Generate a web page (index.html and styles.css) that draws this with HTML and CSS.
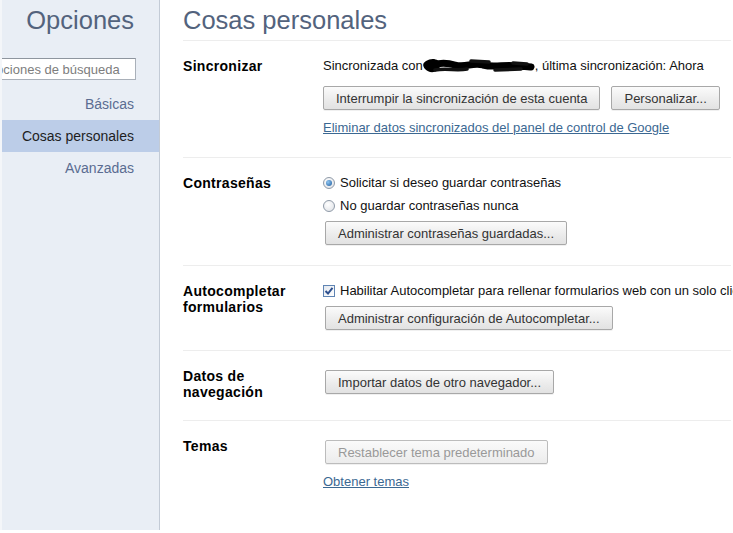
FILE: index.html
```html
<html>
<head>
  <meta charset="UTF-8">
  <title>Opciones - Cosas personales</title>
  <link rel="stylesheet" href="styles.css">
</head>
<body>
  <div class="page">
    <div class="sidebar">
      <div class="side-title">Opciones</div>
      <div class="search-wrap">
        <input class="search" type="text" placeholder="Opciones de búsqueda">
      </div>
      <div class="nav">
        <div class="nav-item">Básicas</div>
        <div class="nav-item selected">Cosas personales</div>
        <div class="nav-item">Avanzadas</div>
      </div>
    </div>

    <div class="main">
      <div class="main-title">Cosas personales</div>

      <div class="section">
        <div class="label">Sincronizar</div>
        <div class="content">
          <div class="line">Sincronizada con<svg class="scribble" width="112" height="18" viewBox="0 0 112 18">
              <!-- hand-drawn blot over the account address -->
              <path d="M3 4 C9 0 18 2 17 9 C16 16 6 17 2 12 C-1 8 0 6 3 4 Z" fill="#000"/>
              <path d="M6 9 C14 6 22 5 32 8 C42 11 50 5 60 8 C72 11 82 7 94 9 C100 10 104 9 108 10" stroke="#000" stroke-width="7" fill="none" stroke-linecap="round"/>
              <path d="M12 13 C24 11 34 14 44 12 M48 4 L66 5 M72 13 L98 12 M90 6 L104 7" stroke="#111" stroke-width="3.5" fill="none" stroke-linecap="round"/>
            </svg>, última sincronización: Ahora</div>
          <div class="btn-row first-gap">
            <button class="btn">Interrumpir la sincronización de esta cuenta</button>
            <button class="btn">Personalizar...</button>
          </div>
          <a class="link" href="#">Eliminar datos sincronizados del panel de control de Google</a>
        </div>
      </div>

      <div class="section">
        <div class="label">Contraseñas</div>
        <div class="content">
          <div class="line"><span class="radio checked"></span>Solicitar si deseo guardar contraseñas</div>
          <div class="line second"><span class="radio"></span>No guardar contraseñas nunca</div>
          <div class="btn-row indent">
            <button class="btn">Administrar contraseñas guardadas...</button>
          </div>
        </div>
      </div>

      <div class="section">
        <div class="label">Autocompletar<br>formularios</div>
        <div class="content">
          <div class="line"><span class="checkbox">
              <svg width="10" height="10" viewBox="0 0 10 10"><path d="M1.5 5 L4 7.5 L8.5 1.8" stroke="#2d4f8e" stroke-width="2" fill="none"/></svg>
            </span>Habilitar Autocompletar para rellenar formularios web con un solo clic</div>
          <div class="btn-row indent">
            <button class="btn">Administrar configuración de Autocompletar...</button>
          </div>
        </div>
      </div>

      <div class="section">
        <div class="label">Datos de<br>navegación</div>
        <div class="content">
          <div class="btn-row indent top">
            <button class="btn">Importar datos de otro navegador...</button>
          </div>
        </div>
      </div>

      <div class="section last">
        <div class="label">Temas</div>
        <div class="content">
          <div class="btn-row indent top">
            <button class="btn" disabled>Restablecer tema predeterminado</button>
          </div>
          <a class="link" href="#">Obtener temas</a>
        </div>
      </div>
    </div>
  </div>
</body>
</html>
```

FILE: styles.css
```css
body {
  margin: 0;
  padding: 0;
  background: #fff;
  font-family: 'Liberation Sans', Arial, sans-serif;
  font-size: 13px;
  color: #111;
  height: 533px;
  overflow: hidden;
}
.page {
  display: flex;
  height: 530px;
}
.sidebar {
  width: 157px;
  flex-shrink: 0;
  background: #e9eef5;
  border-left: 2px solid #f4f6f9;
  border-right: 1px solid #c3cbd6;
  overflow: hidden;
}
.side-title {
  height: 30px;
  padding: 5px 25px 5px 0;
  line-height: 30px;
  font-size: 25.5px;
  color: #53637d;
  text-align: right;
}
.search-wrap {
  display: flex;
  justify-content: flex-end;
  padding-right: 23px;
  margin-top: 18px;
}
.search {
  flex-shrink: 0;
  width: 154px;
  height: 22px;
  box-sizing: border-box;
  padding: 2px 3px;
  border: 1px solid #a9b0b9;
  border-top-color: #8e959e;
  background: #fff;
  font-family: 'Liberation Sans', Arial, sans-serif;
  font-size: 13px;
  outline: none;
}
.search::placeholder {
  color: #7d7d7d;
}
.nav {
  margin-top: 8px;
}
.nav-item {
  height: 32px;
  line-height: 32px;
  padding-right: 25px;
  text-align: right;
  font-size: 14px;
  color: #5a6c91;
}
.nav-item.selected {
  background: #bccde8;
  color: #1e1e1e;
}

.main {
  flex: 1;
  padding: 0 2px 0 23px;
  overflow: hidden;
  white-space: nowrap;
}
.main-title {
  height: 30px;
  padding: 5px 0;
  line-height: 30px;
  font-size: 25.5px;
  color: #53637d;
  border-bottom: 1px solid #ededed;
}
.section {
  display: flex;
  padding: 16px 0 20px;
  border-bottom: 1px solid #ededed;
}
.section.last {
  border-bottom: none;
}
.label {
  width: 140px;
  flex-shrink: 0;
  padding-top: 1px;
  font-weight: bold;
  font-size: 14px;
  line-height: 16px;
  letter-spacing: 0.3px;
  color: #000;
}
.content {
  display: flex;
  flex-direction: column;
  align-items: flex-start;
}
.line {
  display: flex;
  align-items: center;
  height: 18px;
  line-height: 18px;
}
.line.second {
  margin-top: 5px;
}
.scribble {
  display: inline-block;
  margin-bottom: 1px;
}
.btn-row {
  display: flex;
  gap: 11px;
  margin-top: 6px;
}
.btn-row.first-gap {
  margin-top: 11px;
}
.btn-row.indent {
  margin-left: 2px;
}
.btn-row.top {
  margin-top: 3px;
}
.btn {
  height: 24px;
  padding: 0 12px;
  border: 1px solid #a8a8a8;
  border-radius: 2px;
  background: linear-gradient(#fbfbfb, #ebebeb 60%, #e2e2e2);
  font-family: 'Liberation Sans', Arial, sans-serif;
  font-size: 13px;
  color: #333;
  box-shadow: 0 1px 0 #f0f0f0;
}
.btn:disabled {
  color: #999;
  border-color: #bcbcbc;
  background: linear-gradient(#fafafa, #ececec);
}
.link {
  margin-top: 9px;
  line-height: 18px;
  color: #3b6892;
  text-decoration: underline;
}
.radio {
  width: 12px;
  height: 12px;
  box-sizing: border-box;
  margin-right: 5px;
  border-radius: 50%;
  border: 1px solid #8f9aa8;
  background: radial-gradient(circle at 40% 35%, #fff, #dcdfe4);
  display: flex;
  align-items: center;
  justify-content: center;
}
.radio.checked::after {
  content: '';
  width: 6px;
  height: 6px;
  border-radius: 50%;
  background: radial-gradient(circle at 35% 35%, #8fc6f2, #1d5a9c);
}
.checkbox {
  width: 12px;
  height: 12px;
  box-sizing: border-box;
  margin-right: 5px;
  border: 1px solid #5f84b3;
  background: linear-gradient(135deg, #e3e8ef, #fff);
  display: flex;
  align-items: center;
  justify-content: center;
}
```
